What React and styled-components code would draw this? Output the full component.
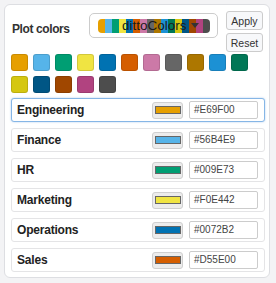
import React from "react";
import styled, { createGlobalStyle } from "styled-components";

const GlobalStyle = createGlobalStyle`
  body {
    margin: 0;
    background: #f3f3f5;
    font-family: "Liberation Sans", Arial, sans-serif;
    color: #222;
  }
`;

const palette = [
  "#E69F00", "#56B4E9", "#009E73", "#F0E442", "#0072B2", "#D55E00",
  "#CC79A7", "#666666", "#AD7700", "#1C91D4", "#007756", "#D5C711",
  "#005685", "#A04700", "#B14380", "#4D4D4D",
];

const groups = [
  { name: "Engineering", color: "#E69F00", focused: true },
  { name: "Finance", color: "#56B4E9" },
  { name: "HR", color: "#009E73" },
  { name: "Marketing", color: "#F0E442" },
  { name: "Operations", color: "#0072B2" },
  { name: "Sales", color: "#D55E00" },
];

const Card = styled.div`
  margin: 4px;
  width: 266px;
  height: 274px;
  box-sizing: border-box;
  background: #fff;
  border: 1px solid #dddee2;
  border-radius: 6px;
  padding: 6px 4px 6px 6px;
`;

const Header = styled.div`
  display: flex;
  align-items: flex-start;
`;

const Label = styled.div`
  width: 77px;
  margin-top: 11px;
  font-size: 12px;
  line-height: 14px;
  font-weight: bold;
  letter-spacing: -0.4px;
  color: #333;
  padding-left: 1px;
`;

const Picker = styled.div`
  position: relative;
  margin-top: 2px;
  width: 129px;
  height: 25px;
  box-sizing: border-box;
  border: 1px solid #ccc;
  border-radius: 5px;
  display: flex;
  align-items: center;
  padding-left: 8px;
`;

const Strip = styled.div`
  display: flex;
  width: 112px;
  height: 14px;
  border-radius: 4px;
  overflow: hidden;
`;

const StripCell = styled.div`
  flex: 1;
  background: ${(p) => p.$c};
`;

const PickerText = styled.div`
  position: absolute;
  left: 32px;
  top: 3px;
  font-size: 13.5px;
  line-height: 17px;
  color: #1a1a1a;
  display: flex;
  align-items: center;
  gap: 4px;
`;

const Caret = styled.span`
  width: 0;
  height: 0;
  border-left: 4px solid transparent;
  border-right: 4px solid transparent;
  border-top: 5px solid #333;
`;

const Buttons = styled.div`
  margin-left: 8px;
  display: flex;
  flex-direction: column;
  gap: 3px;
`;

const Button = styled.button`
  width: 37px;
  height: 19px;
  padding: 0;
  font-family: inherit;
  font-size: 10.5px;
  color: #333;
  background: #f7f8fa;
  border: 1px solid #ccc;
  border-radius: 3px;
`;

const Swatches = styled.div`
  display: grid;
  grid-template-columns: repeat(11, 17px);
  gap: 5px;
  margin: 2px 0 0 0;
`;

const Swatch = styled.div`
  width: 17px;
  height: 17px;
  box-sizing: border-box;
  border-radius: 3px;
  border: 1px solid rgba(0, 0, 0, 0.12);
  background: ${(p) => p.$c};
`;

const Rows = styled.div`
  display: flex;
  flex-direction: column;
  gap: 6px;
  margin-top: 5px;
  width: 254px;
`;

const Row = styled.div`
  height: 24px;
  box-sizing: border-box;
  display: flex;
  align-items: center;
  padding: 0 6px 0 5px;
  border: 1px solid ${(p) => (p.$focused ? "#86b6e6" : "#e4e4e6")};
  box-shadow: ${(p) => (p.$focused ? "0 0 2px rgba(90,150,220,0.5)" : "none")};
  border-radius: 3px;
  background: #fff;
`;

const Name = styled.div`
  flex: 1;
  font-size: 12px;
  font-weight: bold;
  letter-spacing: -0.2px;
  color: #222;
`;

const ColorButton = styled.div`
  width: 31px;
  height: 17px;
  box-sizing: border-box;
  background: #ececec;
  border: 1px solid #cfcfcf;
  border-radius: 3px;
  display: flex;
  align-items: center;
  justify-content: center;
`;

const ColorChip = styled.div`
  width: 26px;
  height: 8px;
  box-sizing: border-box;
  border: 1px solid #666;
  background: ${(p) => p.$c};
`;

const HexInput = styled.div`
  margin-left: 6px;
  width: 69px;
  height: 18px;
  box-sizing: border-box;
  border: 1px solid #ccc;
  border-radius: 2px;
  padding-left: 4px;
  font-size: 10px;
  line-height: 16px;
  color: #444;
`;

export default function App() {
  return (
    <>
      <GlobalStyle />
      <Card>
        <Header>
          <Label>Plot colors</Label>
          <Picker>
            <Strip>
              {palette.map((c) => (
                <StripCell key={c} $c={c} />
              ))}
            </Strip>
            <PickerText>
              dittoColors <Caret />
            </PickerText>
          </Picker>
          <Buttons>
            <Button>Apply</Button>
            <Button>Reset</Button>
          </Buttons>
        </Header>
        <Swatches>
          {palette.map((c) => (
            <Swatch key={c} $c={c} />
          ))}
        </Swatches>
        <Rows>
          {groups.map((g) => (
            <Row key={g.name} $focused={g.focused}>
              <Name>{g.name}</Name>
              <ColorButton>
                <ColorChip $c={g.color} />
              </ColorButton>
              <HexInput>{g.color}</HexInput>
            </Row>
          ))}
        </Rows>
      </Card>
    </>
  );
}
